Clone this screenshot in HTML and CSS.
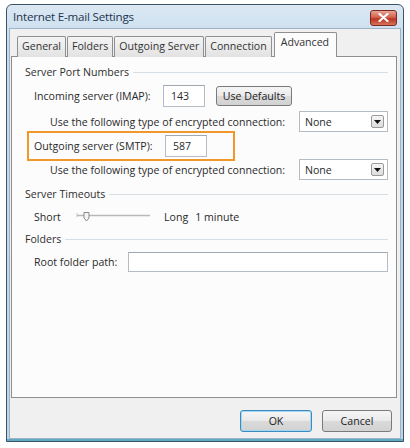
FILE: index.html
```html
<!DOCTYPE html>
<html>
<head>
<meta charset="utf-8">
<link rel="stylesheet" href="styles.css">
</head>
<body>
<div class="window">
  <div class="titlebar">
    <span class="title">Internet E-mail Settings</span>
    <span class="close"><svg width="11" height="9" viewBox="0 0 11 9"><path d="M1.5 1 L9.5 8 M9.5 1 L1.5 8" stroke="#fff" stroke-width="2.2" stroke-linecap="round"/></svg></span>
  </div>
  <div class="client">
    <div class="tabs">
      <span class="tab">General</span>
      <span class="tab">Folders</span>
      <span class="tab">Outgoing Server</span>
      <span class="tab">Connection</span>
      <span class="tab active">Advanced</span>
    </div>
    <div class="panel">
      <div class="legend legend-first"><span>Server Port Numbers</span><i class="rule"></i></div>
      <div class="row row-imap">
        <span class="label">Incoming server (IMAP):</span>
        <span class="field port">143</span>
        <span class="btn btn-defaults">Use Defaults</span>
      </div>
      <div class="row row-enc">
        <span class="enc-text">Use the following type of encrypted connection:</span>
        <span class="select"><span>None</span><span class="arrow"><svg width="7" height="4" viewBox="0 0 7 4"><path d="M0 0 H7 L3.5 4 Z" fill="#111"/></svg></span></span>
      </div>
      <div class="highlight">
        <span class="label label-smtp">Outgoing server (SMTP):</span>
        <span class="field port">587</span>
      </div>
      <div class="row row-enc row-enc2">
        <span class="enc-text">Use the following type of encrypted connection:</span>
        <span class="select"><span>None</span><span class="arrow"><svg width="7" height="4" viewBox="0 0 7 4"><path d="M0 0 H7 L3.5 4 Z" fill="#111"/></svg></span></span>
      </div>
      <div class="legend legend-timeouts"><span>Server Timeouts</span><i class="rule"></i></div>
      <div class="row row-slider">
        <span class="short">Short</span>
        <svg class="slider" width="76" height="12" viewBox="0 0 76 12">
          <line x1="2" y1="4.5" x2="75" y2="4.5" stroke="#b8b8b8" stroke-width="1.5"/>
          <line x1="2" y1="2" x2="2" y2="6" stroke="#c8c8c8" stroke-width="1"/>
          <path d="M9 1.5 H14 V7 L11.5 10 L9 7 Z" fill="#f4f4f4" stroke="#8a8a8a" stroke-width="1"/>
        </svg>
        <span class="long">Long</span>
        <span class="minute">1 minute</span>
      </div>
      <div class="legend legend-folders"><span>Folders</span><i class="rule"></i></div>
      <div class="row row-root">
        <span class="label label-root">Root folder path:</span>
        <span class="field root"></span>
      </div>
    </div>
    <div class="buttons">
      <span class="btn btn-ok">OK</span>
      <span class="btn btn-cancel">Cancel</span>
    </div>
  </div>
</div>
</body>
</html>
```
FILE: styles.css
```css
html, body {
  margin: 0;
  padding: 0;
  background: #ffffff;
}
body {
  font-family: "Open Sans", "Noto Sans", sans-serif;
  font-size: 10.6px;
  color: #2a2a2a;
}
.window {
  margin: 4px 0 0 6px;
  width: 392px;
  height: 434px;
  border: 1px solid #3f5367;
  border-radius: 6px 6px 0 0;
  background: linear-gradient(#dbe8f3, #c6dbec 40px, #bed5e8);
  padding: 0 2px 2px 2px;
  box-sizing: content-box;
  display: flex;
  flex-direction: column;
  box-shadow: inset 0 -2px 0 #5fa9c4;
}
.titlebar {
  height: 23px;
  display: flex;
  align-items: center;
  justify-content: space-between;
  padding: 0 4px 0 4px;
}
.title {
  font-size: 11.6px;
  color: #1d3550;
  letter-spacing: -0.2px;
}
.close {
  width: 25px;
  height: 14px;
  border: 1px solid #7a2a20;
  border-radius: 3px;
  background: linear-gradient(#e8a595, #cf5a45 50%, #b8321f 55%, #d7735c);
  display: flex;
  align-items: center;
  justify-content: center;
  margin-top: 2px;
}
.client {
  flex: 1;
  background: #f0f0f0;
  border: 1px solid #9fb3c6;
  padding: 4px 3px 0 1px;
  display: flex;
  flex-direction: column;
}
.tabs {
  display: flex;
  align-items: flex-end;
  padding-left: 6px;
  height: 24px;
  position: relative;
  z-index: 1;
  margin-bottom: -1px;
}
.tab {
  height: 20px;
  line-height: 19px;
  border: 1px solid #8e8f8f;
  border-bottom: none;
  background: linear-gradient(#f4f4f4, #e2e2e2);
  color: #333;
  padding: 0 4px;
  margin-right: 1px;
  border-radius: 2px 2px 0 0;
}
.tab.active {
  height: 24px;
  line-height: 18px;
  background: #fcfcfc;
  padding: 0 7px 0 6px;
  margin-left: 1px;
}
.panel {
  height: 342px;
  border: 1px solid #8e8f8f;
  background: #fcfcfc;
  padding: 0 8px 0 13px;
  box-sizing: border-box;
}
.legend {
  display: flex;
  align-items: center;
  height: 14px;
  color: #2e2e2e;
}
.legend span {
  padding-right: 4px;
}
.rule {
  flex: 1;
  height: 0;
  border-top: 1px solid #d5dfe5;
  margin-right: 0;
}
.legend-first { margin-top: 8px; }
.row {
  display: flex;
  align-items: center;
}
.row-imap {
  margin-top: 6px;
  height: 22px;
  padding-left: 9px;
}
.label {
  width: 129px;
  flex: none;
}
.field {
  height: 20px;
  border: 1px solid #b5bcc4;
  border-top-color: #a0a8b0;
  background: #fff;
  box-sizing: border-box;
  display: flex;
  align-items: center;
  padding-left: 7px;
}
.port {
  width: 42px;
  height: 22px;
}
.btn {
  display: flex;
  align-items: center;
  justify-content: center;
  border: 1px solid #7a7a7a;
  border-radius: 3px;
  background: linear-gradient(#f6f6f6, #eaeaea 48%, #dadada 52%, #d2d2d2);
  box-sizing: border-box;
  color: #222;
}
.btn-defaults {
  margin-left: 11px;
  width: 76px;
  height: 20px;
}
.row-enc {
  margin-top: 4px;
  height: 21px;
  padding-left: 25px;
}
.enc-text { flex: none; }
.select {
  margin-left: auto;
  width: 89px;
  height: 21px;
  border: 1px solid #b5bcc4;
  background: #fff;
  box-sizing: border-box;
  display: flex;
  align-items: center;
  justify-content: space-between;
  padding: 0 3px 0 5px;
}
.arrow {
  width: 13px;
  height: 13px;
  border: 1px solid #9a9a9a;
  border-radius: 2px;
  background: linear-gradient(#f6f6f6, #dcdcdc);
  display: flex;
  align-items: center;
  justify-content: center;
  box-sizing: border-box;
}
.highlight {
  margin-top: -1px;
  margin-left: 2px;
  width: 208px;
  height: 30px;
  border: 2px solid #f0992a;
  box-sizing: border-box;
  display: flex;
  align-items: center;
  padding-left: 5px;
}
.label-smtp { width: 131px; }
.row-enc2 { margin-top: -2px; }
.legend-timeouts { margin-top: 7px; }
.row-slider {
  margin-top: 8px;
  height: 16px;
  padding-left: 9px;
}
.short { width: 41px; flex: none; }
.slider { flex: none; }
.long { margin-left: 13px; }
.minute { margin-left: 7px; }
.legend-folders { margin-top: 7px; }
.row-root {
  margin-top: 6px;
  height: 20px;
  padding-left: 9px;
}
.label-root { width: 94px; }
.root {
  flex: 1;
  height: 20px;
}
.buttons {
  display: flex;
  justify-content: flex-end;
  gap: 10px;
  margin-top: 12px;
  padding-right: 5px;
}
.btn-ok {
  width: 72px;
  height: 22px;
  border-color: #3d8bbf;
  box-shadow: inset 0 0 0 1px #9fd6f0;
}
.btn-cancel {
  width: 70px;
  height: 22px;
}
```
